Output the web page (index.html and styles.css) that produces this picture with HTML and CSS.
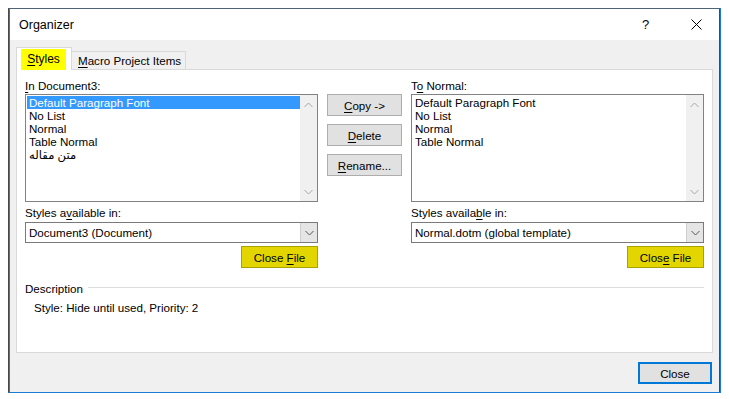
FILE: index.html
```html
<!DOCTYPE html>
<html lang="en">
<head>
<meta charset="utf-8">
<title>Organizer</title>
<link rel="stylesheet" href="styles.css">
</head>
<body>
<div class="window">
  <div class="titlebar">
    <span class="title">Organizer</span>
    <span class="help">?</span>
    <svg class="close-x" width="11" height="11" viewBox="0 0 11 11"><path d="M0.5 0.5 L10.5 10.5 M10.5 0.5 L0.5 10.5" stroke="#000" stroke-width="1" fill="none"/></svg>
  </div>
  <div class="client">
    <div class="tabs">
      <div class="tab active"><span class="hl"><u>S</u>tyles</span></div>
      <div class="tab"><u>M</u>acro Project Items</div>
    </div>
    <div class="panel">
      <div class="row">
        <div class="col">
          <div class="label"><u>I</u>n Document3:</div>
          <div class="list">
            <div class="items">
              <div class="item sel">Default Paragraph Font</div>
              <div class="item">No List</div>
              <div class="item">Normal</div>
              <div class="item">Table Normal</div>
              <div class="item">متن مقاله</div>
            </div>
            <div class="scroll">
              <svg width="9" height="6" viewBox="0 0 9 6"><path d="M0.5 5 L4.5 1 L8.5 5" stroke="#a6a6a6" fill="none"/></svg>
              <svg width="9" height="6" viewBox="0 0 9 6"><path d="M0.5 1 L4.5 5 L8.5 1" stroke="#a6a6a6" fill="none"/></svg>
            </div>
          </div>
          <div class="label avail">Styles a<u>v</u>ailable in:</div>
          <div class="combo">
            <span class="combo-text">Document3 (Document)</span>
            <span class="drop"><svg width="9" height="6" viewBox="0 0 9 6"><path d="M0.5 1 L4.5 5 L8.5 1" stroke="#555" fill="none"/></svg></span>
          </div>
          <div class="btnrow"><div class="btn yellow"><span>Close <u>F</u>ile</span></div></div>
        </div>
        <div class="buttons">
          <div class="btn"><span><u>C</u>opy -&gt;</span></div>
          <div class="btn"><span><u>D</u>elete</span></div>
          <div class="btn"><span><u>R</u>ename...</span></div>
        </div>
        <div class="col">
          <div class="label">T<u>o</u> Normal:</div>
          <div class="list">
            <div class="items">
              <div class="item">Default Paragraph Font</div>
              <div class="item">No List</div>
              <div class="item">Normal</div>
              <div class="item">Table Normal</div>
            </div>
            <div class="scroll">
              <svg width="9" height="6" viewBox="0 0 9 6"><path d="M0.5 5 L4.5 1 L8.5 5" stroke="#a6a6a6" fill="none"/></svg>
              <svg width="9" height="6" viewBox="0 0 9 6"><path d="M0.5 1 L4.5 5 L8.5 1" stroke="#a6a6a6" fill="none"/></svg>
            </div>
          </div>
          <div class="label avail">Styles availa<u>b</u>le in:</div>
          <div class="combo">
            <span class="combo-text">Normal.dotm (global template)</span>
            <span class="drop"><svg width="9" height="6" viewBox="0 0 9 6"><path d="M0.5 1 L4.5 5 L8.5 1" stroke="#555" fill="none"/></svg></span>
          </div>
          <div class="btnrow"><div class="btn yellow"><span>Clos<u>e</u> File</span></div></div>
        </div>
      </div>
      <div class="desc-head">
        <span>Description</span>
        <span class="rule"></span>
      </div>
      <div class="desc">Style: Hide until used, Priority: 2</div>
    </div>
    <div class="footer">
      <div class="btn default"><span>Close</span></div>
    </div>
  </div>
</div>
</body>
</html>
```

FILE: styles.css
```css
* { box-sizing: border-box; }
html, body { margin: 0; padding: 0; background: #fff; }
body {
  font-family: "Liberation Sans", "DejaVu Sans", sans-serif;
  font-size: 11.6px;
  color: #000;
}
u { text-decoration: underline; text-underline-offset: 2px; }

.window {
  margin: 8px 0 0 8px;
  width: 713px;
  height: 385px;
  border: 1px solid #1a7bd2;
  border-left-color: #4a4a4a;
  border-top-color: #4f6479;
  box-shadow: inset 1px 0 0 #1a7bd2, inset -1px 0 0 #4a4a4a;
  display: flex;
  flex-direction: column;
  background: #f0f0f0;
}

.titlebar {
  height: 31px;
  background: #fff;
  display: flex;
  align-items: center;
  padding-left: 9px;
  margin: 0 1px;
}
.title { flex: 1; font-size: 12.5px; padding-top: 1px; }
.help { width: 10px; margin-right: 39px; font-size: 13px; }
.close-x { margin-right: 17px; }

.client {
  flex: 1;
  display: flex;
  flex-direction: column;
  padding: 7px 7px 0 7px;
}

.tabs {
  display: flex;
  align-items: flex-end;
  height: 22px;
}
.tab {
  height: 18px;
  border: 1px solid #d9d9d9;
  border-left: none;
  border-bottom: none;
  background: #f0f0f0;
  width: 114px;
  padding-left: 6px;
  line-height: 17px;
}
.tab.active {
  height: 23px;
  width: 56px;
  border-left: 1px solid #d9d9d9;
  background: #fff;
  padding: 1px 5px 0 4px;
  position: relative;
  z-index: 1;
  margin-bottom: -1px;
}
.hl {
  display: block;
  background: #ffff00;
  height: 21px;
  line-height: 21px;
  text-align: center;
  font-size: 12px;
}

.panel {
  height: 284px;
  background: #fff;
  border: 1px solid #d9d9d9;
  padding: 8px 8px 0 8px;
}

.row { display: flex; }
.col { width: 293px; display: flex; flex-direction: column; }
.buttons {
  width: 75px;
  margin: 0 9px;
  padding-top: 16px;
  display: flex;
  flex-direction: column;
  gap: 8px;
}

.label { height: 16px; line-height: 16px; }
.label.avail { margin-top: 3px; margin-bottom: 1px; }

.list {
  height: 108px;
  border: 1px solid #828282;
  display: flex;
}
.items { flex: 1; padding: 1px 0 0 1px; }
.item { height: 13px; line-height: 13px; padding-left: 2px; white-space: nowrap; }
.item.sel { background: #3399ff; color: #fff; }
.scroll {
  width: 17px;
  background: #f0f0f0;
  display: flex;
  flex-direction: column;
  justify-content: space-between;
  align-items: center;
  padding: 7px 0 6px;
}

.combo {
  height: 21px;
  border: 1px solid #7a7a7a;
  display: flex;
  align-items: center;
}
.combo-text { flex: 1; padding-left: 3px; }
.drop {
  width: 17px;
  height: 19px;
  background: #e5e5e5;
  border-left: 1px solid #cfcfcf;
  display: flex;
  align-items: center;
  justify-content: center;
}

.btn {
  height: 22px;
  border: 1px solid #adadad;
  background: #e1e1e1;
  display: flex;
  align-items: center;
  justify-content: center;
  white-space: nowrap;
}
.btnrow { display: flex; justify-content: flex-end; margin-top: 3px; }
.btn.yellow {
  width: 77px;
  background: #e2d500;
  border-color: #aaa200;
}

.desc-head {
  display: flex;
  align-items: center;
  margin-top: 12px;
  height: 16px;
  gap: 5px;
}
.rule { flex: 1; height: 1px; background: #dcdcdc; margin-top: -2px; }
.desc { margin-top: 4px; padding-left: 9px; height: 16px; line-height: 16px; }

.footer {
  display: flex;
  justify-content: flex-end;
  padding: 9px 1px 0 0;
}
.btn.default {
  width: 74px;
  border: 2px solid #0078d7;
}
```
